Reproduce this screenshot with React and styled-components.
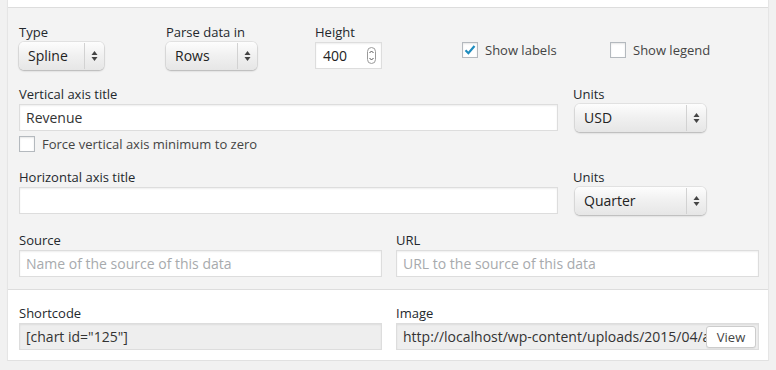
import React from "react";
import styled, { createGlobalStyle } from "styled-components";

const GlobalStyle = createGlobalStyle`
  html, body { margin: 0; padding: 0; background: #f1f1f1; }
  body { font-family: "Open Sans", "Liberation Sans", sans-serif; font-size: 13px; color: #444; }
`;

const Page = styled.div`
  padding-left: 7px;
  width: 762px;
`;

const Panel = styled.div`
  border-left: 1px solid #e5e5e5;
  border-right: 1px solid #e5e5e5;
  border-bottom: 1px solid #e1e1e1;
  box-shadow: 0 1px 1px rgba(0, 0, 0, 0.04);
  background: #fff;
`;

const TopStrip = styled.div`
  height: 7px;
  background: #fff;
  border-bottom: 1px solid #dddddd;
`;

const Section = styled.div`
  background: ${(p) => (p.$white ? "#fff" : "#f3f3f3")};
  border-top: ${(p) => (p.$white ? "1px solid #dddddd" : "none")};
  padding: ${(p) => p.$pad};
  display: flex;
  flex-direction: column;
`;

const TopRow = styled.div`
  display: grid;
  grid-template-columns: 147px 149px 147px 148px auto;
  align-items: start;
  margin-bottom: 15px;
`;

const AxisRow = styled.div`
  display: grid;
  grid-template-columns: 554px 1fr;
  margin-bottom: 16px;
`;

const HalfRow = styled.div`
  display: grid;
  grid-template-columns: 363px 363px;
  column-gap: 14px;
`;

const Field = styled.div`
  display: flex;
  flex-direction: column;
  align-items: flex-start;
`;

const Label = styled.label`
  display: block;
  line-height: 19px;
  color: #23282d;
  font-size: 13px;
  white-space: nowrap;
`;

const SelectBox = styled.div`
  display: flex;
  align-items: center;
  width: ${(p) => p.$w}px;
  height: 28px;
  box-sizing: border-box;
  border-radius: 5px;
  margin-left: ${(p) => p.$ml || 0}px;
  background: linear-gradient(#fdfdfd, #f1f1f1 45%, #e6e6e6);
  box-shadow: 0 0 0 1px rgba(0, 0, 0, 0.06), 0 1px 2px rgba(0, 0, 0, 0.22);
  color: #222;
  font-size: 14px;
`;

const SelectValue = styled.span`
  flex: 1;
  padding-left: 9px;
  line-height: 28px;
`;

const SelectDivider = styled.span`
  width: 1px;
  height: 26px;
  background: #d2d2d2;
`;

const SelectArrows = styled.span`
  width: 19px;
  display: flex;
  justify-content: center;
  align-items: center;
`;

const NumberBox = styled.div`
  display: flex;
  align-items: center;
  width: 67px;
  height: 27px;
  box-sizing: border-box;
  border: 1px solid #dddddd;
  background: #fff;
  box-shadow: inset 0 1px 2px rgba(0, 0, 0, 0.07);
  color: #222;
  font-size: 14px;
  padding: 0 5px 0 7px;
`;

const NumberValue = styled.span`
  flex: 1;
`;

const TextBox = styled.div`
  height: 27px;
  width: ${(p) => (p.$w ? `${p.$w}px` : "100%")};
  box-sizing: border-box;
  border: 1px solid #dddddd;
  background: ${(p) => (p.$readonly ? "#eeeeee" : "#fff")};
  box-shadow: inset 0 1px 2px rgba(0, 0, 0, 0.07);
  display: flex;
  align-items: center;
  padding: 0 2px 0 6px;
  font-size: 14px;
  color: ${(p) => (p.$placeholder ? "#a7aaad" : "#333")};
  white-space: nowrap;
  overflow: hidden;
`;

const TextValue = styled.span`
  flex: 1;
  min-width: 0;
  overflow: hidden;
  white-space: nowrap;
`;

const ViewButton = styled.span`
  flex: none;
  height: 22px;
  width: 50px;
  box-sizing: border-box;
  border: 1px solid #cccccc;
  border-radius: 3px;
  background: #fff;
  color: #444;
  font-size: 13px;
  display: flex;
  align-items: center;
  justify-content: center;
  box-shadow: 0 1px 0 rgba(0, 0, 0, 0.05);
`;

const CheckLine = styled.div`
  display: flex;
  align-items: center;
  gap: 7px;
  margin-top: ${(p) => p.$mt || 0}px;
  color: #444;
  font-size: 13px;
  line-height: 16px;
  white-space: nowrap;
`;

const Box = styled.span`
  width: 16px;
  height: 16px;
  box-sizing: border-box;
  border: 1px solid #b4b9be;
  background: #fff;
  box-shadow: inset 0 1px 2px rgba(0, 0, 0, 0.1);
  display: flex;
  align-items: center;
  justify-content: center;
  flex: none;
`;

const Arrows = () => (
  <svg width="7" height="12" viewBox="0 0 7 12">
    <path d="M3.5 1 L6.5 5 L0.5 5 Z" fill="#444" />
    <path d="M3.5 11 L6.5 7 L0.5 7 Z" fill="#444" />
  </svg>
);

const Spinner = () => (
  <svg width="9" height="17" viewBox="0 0 9 17">
    <rect x="0.5" y="0.5" width="8" height="16" rx="4" fill="#fff" stroke="#9a9a9a" />
    <path d="M2.5 6 L4.5 4 L6.5 6" fill="none" stroke="#555" strokeWidth="1" />
    <path d="M2.5 11 L4.5 13 L6.5 11" fill="none" stroke="#555" strokeWidth="1" />
  </svg>
);

const Check = () => (
  <svg width="14" height="14" viewBox="0 0 14 14">
    <path d="M2.5 7.2 L5.4 10.2 L11.5 3" fill="none" stroke="#1e8cbe" strokeWidth="2.2" />
  </svg>
);

const Select = ({ w, value, ml }) => (
  <SelectBox $w={w} $ml={ml}>
    <SelectValue>{value}</SelectValue>
    <SelectDivider />
    <SelectArrows>
      <Arrows />
    </SelectArrows>
  </SelectBox>
);

const Checkbox = ({ checked, label, mt }) => (
  <CheckLine $mt={mt}>
    <Box>{checked && <Check />}</Box>
    <span>{label}</span>
  </CheckLine>
);

export default function App() {
  return (
    <Page>
      <GlobalStyle />
      <Panel>
        <TopStrip />
        <Section $pad="15px 8px 12px 11px">
          <TopRow>
            <Field>
              <Label>Type</Label>
              <Select w={85} value="Spline" />
            </Field>
            <Field>
              <Label>Parse data in</Label>
              <Select w={91} value="Rows" />
            </Field>
            <Field>
              <Label>Height</Label>
              <NumberBox>
                <NumberValue>400</NumberValue>
                <Spinner />
              </NumberBox>
            </Field>
            <Checkbox checked label="Show labels" mt={19} />
            <Checkbox label="Show legend" mt={19} />
          </TopRow>
          <AxisRow>
            <Field>
              <Label>Vertical axis title</Label>
              <TextBox $w={539}>Revenue</TextBox>
              <Checkbox label="Force vertical axis minimum to zero" mt={5} />
            </Field>
            <Field>
              <Label>Units</Label>
              <Select w={131} value="USD" ml={2} />
            </Field>
          </AxisRow>
          <AxisRow>
            <Field>
              <Label>Horizontal axis title</Label>
              <TextBox $w={539} />
            </Field>
            <Field>
              <Label>Units</Label>
              <Select w={131} value="Quarter" ml={2} />
            </Field>
          </AxisRow>
          <HalfRow>
            <Field>
              <Label>Source</Label>
              <TextBox $placeholder>Name of the source of this data</TextBox>
            </Field>
            <Field>
              <Label>URL</Label>
              <TextBox $placeholder>URL to the source of this data</TextBox>
            </Field>
          </HalfRow>
        </Section>
        <Section $white $pad="14px 8px 10px 11px">
          <HalfRow>
            <Field>
              <Label>Shortcode</Label>
              <TextBox $readonly>[chart id="125"]</TextBox>
            </Field>
            <Field>
              <Label>Image</Label>
              <TextBox $readonly>
                <TextValue>http://localhost/wp-content/uploads/2015/04/a</TextValue>
                <ViewButton>View</ViewButton>
              </TextBox>
            </Field>
          </HalfRow>
        </Section>
      </Panel>
    </Page>
  );
}
